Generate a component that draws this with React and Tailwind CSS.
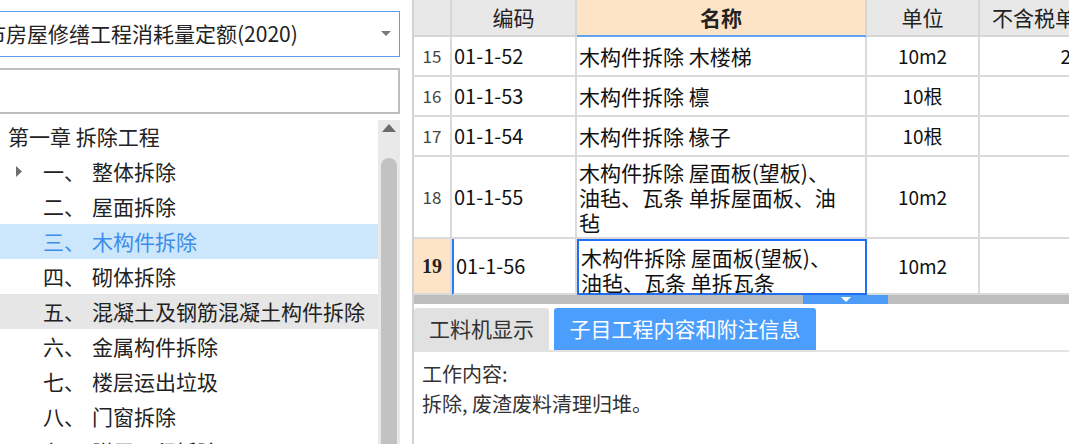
import React from "react";

const treeRows = [
  { num: "一、", name: "整体拆除", arrow: true },
  { num: "二、", name: "屋面拆除" },
  { num: "三、", name: "木构件拆除", selected: true },
  { num: "四、", name: "砌体拆除" },
  { num: "五、", name: "混凝土及钢筋混凝土构件拆除", hover: true },
  { num: "六、", name: "金属构件拆除" },
  { num: "七、", name: "楼层运出垃圾" },
  { num: "八、", name: "门窗拆除" },
  { num: "九、", name: "附属工程拆除" },
];

const rows = [
  { no: 15, code: "01-1-52", name: ["木构件拆除 木楼梯"], unit: "10m2", price: "2", h: "h-[40px]" },
  { no: 16, code: "01-1-53", name: ["木构件拆除 檩"], unit: "10根", price: "", h: "h-[40px]" },
  { no: 17, code: "01-1-54", name: ["木构件拆除 椽子"], unit: "10根", price: "", h: "h-[40px]" },
  {
    no: 18,
    code: "01-1-55",
    name: ["木构件拆除 屋面板(望板)、", "油毡、瓦条 单拆屋面板、油", "毡"],
    unit: "10m2",
    price: "",
    h: "h-[82px]",
  },
  {
    no: 19,
    code: "01-1-56",
    name: ["木构件拆除 屋面板(望板)、", "油毡、瓦条 单拆瓦条"],
    unit: "10m2",
    price: "",
    h: "h-[56px]",
    active: true,
  },
];

const font = { fontFamily: '"Noto Sans CJK SC", "Liberation Sans", sans-serif' };

const LeftPanel = () => (
  <div className="w-[400px] h-full flex flex-col overflow-hidden shrink-0">
    <div className="mt-[11px] h-[46px] -ml-[20px] w-[420px] border border-[#5d9ee8] flex items-center pr-[8px]">
      <span className="flex-1 whitespace-nowrap text-[21px] text-[#222] pl-[4px]">市房屋修缮工程消耗量定额(2020)</span>
      <svg width="10" height="6" viewBox="0 0 10 6">
        <polygon points="0,0 10,0 5,5" fill="#7a7a7a" />
      </svg>
    </div>
    <div className="mt-[11px] h-[46px] -ml-[20px] w-[420px] border-2 border-[#bdbdbd]" />
    <div className="mt-[6px] flex-1 flex min-h-0">
      <div className="flex-1 flex flex-col -mt-[1px]">
        <div className="h-[35px] flex items-center shrink-0 pl-[8px] text-[21px] text-[#222] whitespace-nowrap">
          第一章 拆除工程
        </div>
        {treeRows.map((r) => (
          <div
            key={r.num}
            className={`h-[35px] flex items-center shrink-0 text-[21px] whitespace-nowrap ${
              r.selected ? "bg-[#cce6fc] text-[#3d8ee8]" : r.hover ? "bg-[#e6e6e6] text-[#222]" : "text-[#222]"
            }`}
          >
            <div className="w-[43px] flex items-center pl-[16px]">
              {r.arrow && (
                <svg width="6" height="11" viewBox="0 0 6 11">
                  <polygon points="0,0 6,5.5 0,11" fill="#6f6f6f" />
                </svg>
              )}
            </div>
            <span className="w-[49px]">{r.num}</span>
            <span>{r.name}</span>
          </div>
        ))}
      </div>
      <div className="w-[22px] bg-[#e9e9e9] flex flex-col items-center">
        <svg className="mt-[4px]" width="14" height="8" viewBox="0 0 14 8">
          <polygon points="7,0 14,8 0,8" fill="#6b6b6b" />
        </svg>
        <div className="mt-[26px] w-[16px] flex-1 bg-[#c2c2c2] rounded-t-full" />
      </div>
    </div>
  </div>
);

const Table = () => (
  <div className="h-[295px] overflow-hidden">
    <div className="flex h-[37px] bg-[#e8e8e8] text-[21px] text-[#222]">
      <div className="w-[38px] shrink-0 border-r-2 border-b-2 border-[#d6d6d6]" />
      <div className="w-[125px] shrink-0 border-r-2 border-b-2 border-[#d6d6d6] flex items-center justify-center">编码</div>
      <div className="w-[290px] shrink-0 border-r-2 border-b-2 border-b-[#5ea2f0] border-r-[#d6d6d6] bg-[#fde4c6] flex items-center justify-center font-bold">名称</div>
      <div className="w-[113px] shrink-0 border-r-2 border-b-2 border-[#d6d6d6] flex items-center justify-center">单位</div>
      <div className="w-[120px] shrink-0 border-b-2 border-[#d6d6d6] flex items-center pl-[12px] whitespace-nowrap">不含税单价</div>
    </div>
    {rows.map((r) => (
      <div key={r.no} className={`flex ${r.h} shrink-0 text-[21px] text-[#111]`}>
        <div
          className={`w-[38px] shrink-0 border-r-2 border-b-2 border-[#dadada] flex items-center justify-center ${
            r.active ? "bg-[#fde4c6] font-bold text-[20px] text-[#222]" : "text-[17px] text-[#444]"
          }`}
          style={r.active ? { fontFamily: '"Liberation Serif", serif' } : undefined}
        >
          {r.no}
        </div>
        <div
          className={`w-[125px] shrink-0 border-r-2 border-b-2 border-[#dadada] flex items-center pl-[2px] text-[20px] ${
            r.active ? "border-l-2 border-l-[#2b7bf5]" : ""
          }`}
        >
          {r.code}
        </div>
        <div
          className={`w-[290px] shrink-0 flex flex-col pl-[2px] pr-[4px] leading-[25px] whitespace-nowrap ${
            r.active
              ? "border-2 border-[#1f6ff5] justify-start pt-[4px]"
              : "border-r-2 border-b-2 border-[#dadada] justify-center"
          }`}
        >
          {r.name.map((line) => (
            <div key={line}>{line}</div>
          ))}
        </div>
        <div className="w-[113px] shrink-0 border-r-2 border-b-2 border-[#dadada] flex items-center justify-center text-[19px]">
          {r.unit}
        </div>
        <div className="w-[120px] shrink-0 border-b-2 border-[#dadada] flex items-center justify-end pr-[29px] text-[19px]">
          {r.price}
        </div>
      </div>
    ))}
  </div>
);

const RightPanel = () => (
  <div className="ml-[12px] flex-1 h-full border-l-2 border-[#d2d2d2] flex flex-col overflow-hidden">
    <Table />
    <div className="h-[9px] bg-[#bdbdbd] flex shrink-0">
      <div className="w-[389px] shrink-0" />
      <div className="w-[85px] bg-[#4d9cf7] flex justify-center items-start pt-[2px]">
        <svg width="10" height="5" viewBox="0 0 10 5">
          <polygon points="0,0 10,0 5,5" fill="#ffffff" />
        </svg>
      </div>
    </div>
    <div className="mt-[4px] flex items-end gap-[5px] border-b-2 border-[#e2e2e2] h-[44px] shrink-0">
      <div className="w-[135px] h-[42px] bg-[#e1e1e1] rounded-t-[3px] flex items-center justify-center text-[21px] text-[#333]">
        工料机显示
      </div>
      <div className="w-[262px] h-[42px] bg-[#4b9efc] rounded-t-[3px] flex items-center justify-center text-[21px] text-white">
        子目工程内容和附注信息
      </div>
    </div>
    <div className="pl-[8px] pt-[7px] text-[20px] leading-[30px] text-[#333]">
      <div>工作内容:</div>
      <div>拆除, 废渣废料清理归堆。</div>
    </div>
  </div>
);

export default function App() {
  return (
    <div className="w-[1069px] h-[444px] flex bg-white overflow-hidden" style={font}>
      <LeftPanel />
      <RightPanel />
    </div>
  );
}
